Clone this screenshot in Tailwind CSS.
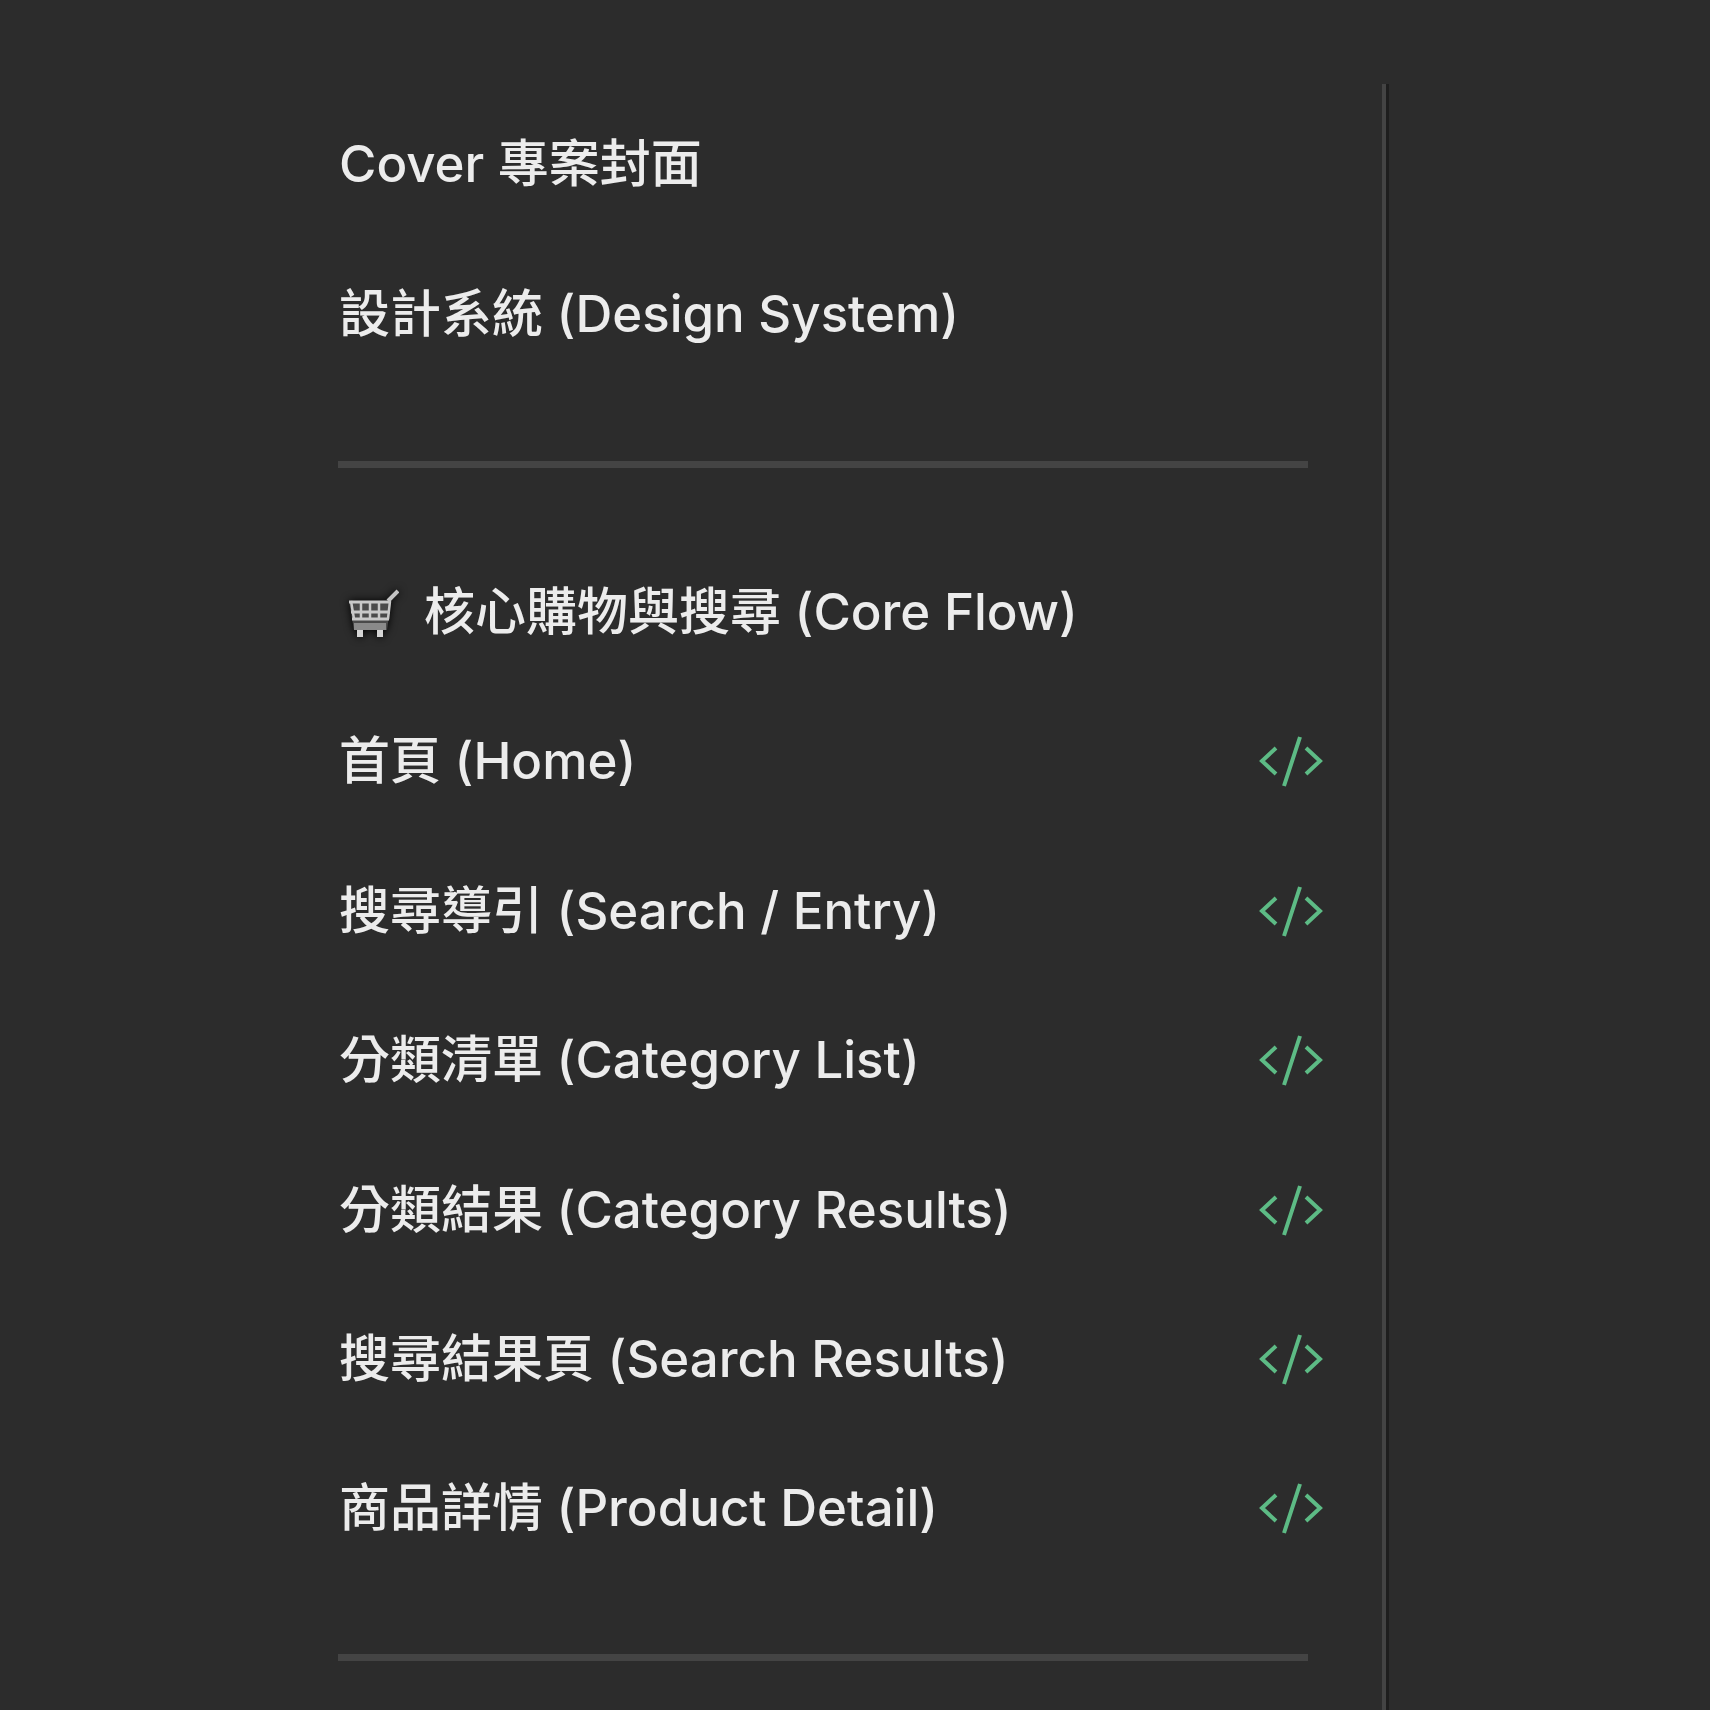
<!DOCTYPE html>
<html lang="zh-Hant">
<head>
    <meta charset="UTF-8">
    <title>Pages</title>
    <script src="https://cdn.jsdelivr.net/npm/@tailwindcss/browser@4"></script>
</head>
<body class="bg-[#2c2c2c] text-[#ececec] font-['Inter','Noto_Sans_CJK_TC',sans-serif] font-medium text-[51px] leading-none">
    <div class="h-[1710px] overflow-hidden pt-[84px] pl-[338px] flex blur-[0.7px]">
        <div class="w-[1048px] h-[1626px] border-r-4 border-[#444444] pr-[58px] pt-[5px]">
            <!-- top pages -->
            <div class="h-[149.4px] flex items-center pl-px">Cover 專案封面</div>
            <div class="h-[149.4px] flex items-center pl-px">設計系統 (Design System)</div>
            <div class="h-[7px] mt-[73px] mb-[69px] bg-[#444444] w-[970px]"></div>

            <!-- core flow -->
            <div class="h-[149.4px] flex items-center pl-[9px] gap-[25px]">
                <svg width="52" height="56" viewBox="0 0 52 56" fill="none" class="shrink-0 drop-shadow-[0_0_4px_#000000]">
                    <path d="M2 18H44L40 47H7Z" fill="#4a4a4a"/>
                    <path d="M2 19H44M4 29H43M5 36H42" stroke="#c8c8c8" stroke-width="3"/>
                    <path d="M4 18L7 36M14 18V36M23 18V36M32 18V36M43 18L41 36" stroke="#c8c8c8" stroke-width="2.5"/>
                    <path d="M7 40H39V47H7Z" fill="#8a8a8a"/>
                    <path d="M41 18L51 8" stroke="#c4c4c4" stroke-width="4"/>
                    <path d="M13 47V54M33 47V54" stroke="#d6d6d6" stroke-width="6"/>
                </svg>
                <span>核心購物與搜尋 (Core Flow)</span>
            </div>
            <div class="h-[149.4px] flex items-center justify-between pl-px">
                <span>首頁 (Home)</span>
                <svg width="66" height="55" viewBox="0 0 66 55" fill="none" stroke="#5dbb85" stroke-width="4" class="mt-[2px]"><path d="M18 14L4 27L18 40M48 14L62 27L48 40M42 3L26 52"/></svg>
            </div>
            <div class="h-[149.4px] flex items-center justify-between pl-px">
                <span>搜尋導引 (Search / Entry)</span>
                <svg width="66" height="55" viewBox="0 0 66 55" fill="none" stroke="#5dbb85" stroke-width="4" class="mt-[2px]"><path d="M18 14L4 27L18 40M48 14L62 27L48 40M42 3L26 52"/></svg>
            </div>
            <div class="h-[149.4px] flex items-center justify-between pl-px">
                <span>分類清單 (Category List)</span>
                <svg width="66" height="55" viewBox="0 0 66 55" fill="none" stroke="#5dbb85" stroke-width="4" class="mt-[2px]"><path d="M18 14L4 27L18 40M48 14L62 27L48 40M42 3L26 52"/></svg>
            </div>
            <div class="h-[149.4px] flex items-center justify-between pl-px">
                <span>分類結果 (Category Results)</span>
                <svg width="66" height="55" viewBox="0 0 66 55" fill="none" stroke="#5dbb85" stroke-width="4" class="mt-[2px]"><path d="M18 14L4 27L18 40M48 14L62 27L48 40M42 3L26 52"/></svg>
            </div>
            <div class="h-[149.4px] flex items-center justify-between pl-px">
                <span>搜尋結果頁 (Search Results)</span>
                <svg width="66" height="55" viewBox="0 0 66 55" fill="none" stroke="#5dbb85" stroke-width="4" class="mt-[2px]"><path d="M18 14L4 27L18 40M48 14L62 27L48 40M42 3L26 52"/></svg>
            </div>
            <div class="h-[149.4px] flex items-center justify-between pl-px">
                <span>商品詳情 (Product Detail)</span>
                <svg width="66" height="55" viewBox="0 0 66 55" fill="none" stroke="#5dbb85" stroke-width="4" class="mt-[2px]"><path d="M18 14L4 27L18 40M48 14L62 27L48 40M42 3L26 52"/></svg>
            </div>
            <div class="h-[7px] mt-[71px] bg-[#444444] w-[970px]"></div>
        </div>
        <div class="w-[3px] h-[1626px] bg-[#1e1e1e]"></div>
    </div>
</body>
</html>
